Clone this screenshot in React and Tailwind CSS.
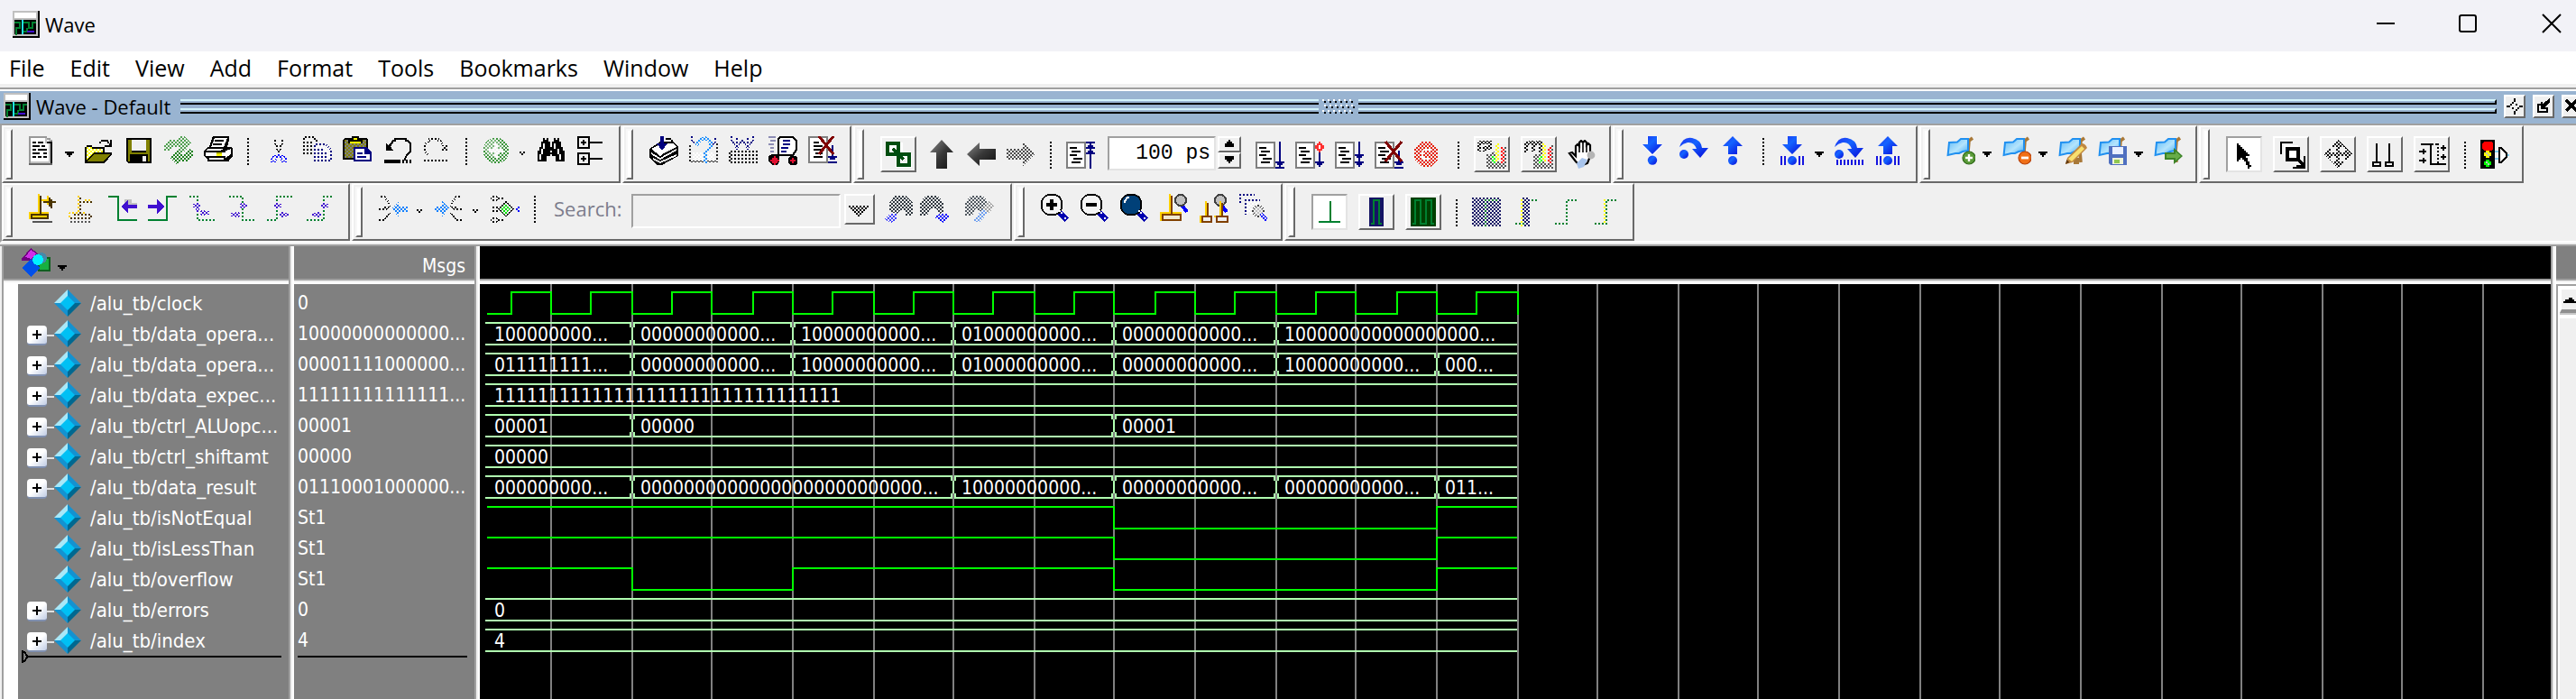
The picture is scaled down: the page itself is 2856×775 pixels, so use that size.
import React from "react";

/* ---------- drawing helpers ---------- */

const PAL = {
  k: "#000000", w: "#ffffff", g: "#808080", s: "#999999", d: "#666666", l: "#c0c0c0",
};

const Art = ({ dim, odd, smooth, children }) => (
  <svg
    viewBox="0 0 16 16"
    className="block size-8 shrink-0"
    shapeRendering={smooth ? "auto" : "crispEdges"}
    fill="none"
    aria-hidden="true"
  >
    {children}
    {dim && <rect width="16" height="16" fill={odd ? "url(#ditherB)" : "url(#ditherA)"} />}
  </svg>
);

const pixelPath = (rows, ch) => {
  let d = "";
  rows.forEach((row, y) => {
    for (let x = 0; x < row.length; x++) {
      if (row[x] !== ch) continue;
      let end = x;
      while (row[end + 1] === ch) end++;
      d += `M${x} ${y}h${end - x + 1}v1h-${end - x + 1}z`;
      x = end;
    }
  });
  return d;
};

const Pixels = ({ rows }) => {
  const chars = [...new Set(rows.join("").replaceAll(".", ""))];
  return chars.map((c) => <path key={c} d={pixelPath(rows, c)} fill={PAL[c]} />);
};

const S = ({ d, c = "#000", w = 1, f = "none" }) => <path d={d} stroke={c} strokeWidth={w} fill={f} />;
const F = ({ d, c = "#000" }) => <path d={d} fill={c} />;

const Defs = () => (
  <svg className="absolute size-0" aria-hidden="true">
    <defs>
      <pattern id="ditherA" width="2" height="2" patternUnits="userSpaceOnUse">
        <path d="M0 0h1v1h-1zM1 1h1v1h-1z" fill="#f0f0f0" />
      </pattern>
      <pattern id="ditherB" width="2" height="2" patternUnits="userSpaceOnUse">
        <path d="M1 0h1v1h-1zM0 1h1v1h-1z" fill="#f0f0f0" />
      </pattern>
      <pattern id="paperYellow" width="2" height="2" patternUnits="userSpaceOnUse">
        <rect width="2" height="2" fill="#ff0" />
        <path d="M0 0h1v1h-1zM1 1h1v1h-1z" fill="#fff" />
      </pattern>
      <pattern id="boardTan" width="2" height="2" patternUnits="userSpaceOnUse">
        <rect width="2" height="2" fill="#808000" />
        <path d="M0 0h1v1h-1zM1 1h1v1h-1z" fill="#808080" />
      </pattern>
      <linearGradient id="stepBlue" x1="0" y1="0" x2="1" y2="1">
        <stop offset="0" stopColor="#2030f0" />
        <stop offset="0.4" stopColor="#1464ff" />
        <stop offset="1" stopColor="#0808d8" />
      </linearGradient>
      <linearGradient id="darkSteel" x1="0" y1="0" x2="1" y2="1">
        <stop offset="0" stopColor="#8c8c8c" />
        <stop offset="0.5" stopColor="#383838" />
        <stop offset="1" stopColor="#101010" />
      </linearGradient>
      <linearGradient id="flagBlue" x1="0" y1="0" x2="1" y2="1">
        <stop offset="0" stopColor="#5cb8f8" />
        <stop offset="0.55" stopColor="#b4e4fc" />
        <stop offset="1" stopColor="#38a8f8" />
      </linearGradient>
    </defs>
  </svg>
);

/* ---------- standard toolbar ---------- */

const NewDoc = () => (
  <Art>
    <Pixels
      rows={[
        "ssssssssss......",
        "swwwwwwwwlss....",
        "swwwwwwwwlwls...",
        "swkkwkkkwlkkk...",
        "swwwwwwwwwwlk...",
        "swkkkkwkkwwlk...",
        "swwwwwwwwwwlk...",
        "swkkwkkkkkwlk...",
        "swwwwwwwwwwlk...",
        "swkkkkwwkkwlk...",
        "swwwwwwwwwwlk...",
        "swkkwkkwkkwlk...",
        "swwwwwwwwwwlk...",
        "swwwwwwwwwwlk...",
        "slllllllllllk...",
        "ddddddddddddd...",
      ]}
    />
  </Art>
);
const OpenDoc = () => (
  <Art>
    <F d="M0 6h1v-1h3v1h7v3h4v1l-4 5H0z" />
    <F d="M1 6h3v1h6v2H5L1 13z" c="url(#paperYellow)" />
    <F d="M5 10h9l-4 4H1z" c="#808000" />
    <S d="M8 3.5h1M9 2.5h4M12.5 3.5h1M13.5 4.5h1" />
    <F d="M15 2v4h-4v-1h3v-3z" />
  </Art>
);
const Save = () => (
  <Art>
    <F d="M1 1h14v14h-13l-1-1z" />
    <F d="M2 2h2v7h8v-7h2v12h-1v-4h-10v4h-1z" c="#808000" />
    <F d="M4 2h8v6H4z" c="#f0f0f0" />
    <F d="M10 11h2v3h-2z" c="#f0f0f0" />
  </Art>
);
const Refresh = () => (
  <Art dim>
    <F d="M0 8V5l3-3h5V0h3l4 4-4 5H8V6H5L3 8z" c="#4fa04f" />
    <F d="M16 8v3l-3 3H8v2H7l-4-4 4-4h2v2h2l3-3z" c="#1c801c" />
  </Art>
);
const Print = () => (
  <Art>
    <F d="M5 0h9v2l-1 4h2l1 1v4l-2 2v1H2v-1L0 11V8l2-2h1z" />
    <F d="M6 1h7l-2 5H4z" c="#fff" />
    <F d="M2 7h9l-2 1H1zM1 9h11v2H1zM3 12h8v1H3zM12 8l3-1v3l-3 2z" c="#fff" />
    <S d="M6 2.5h5M5 4.5h5" />
    <F d="M7 9h3v1H7z" c="#c0c000" />
    <F d="M7 10h3v1H7z" c="#ff0" />
  </Art>
);
const Cut = () => (
  <Art dim odd>
    <S d="M6.5 1v3l1 1v2l1 1v2M10.5 1v3l-1 1v2l-1 1v2" />
    <S d="M8.5 9v2M7.5 11h-2l-1 2v1h2l1-2zM9.5 11h2l1 1v2h-2z" c="#00f" />
  </Art>
);
const Copy = () => (
  <Art dim>
    <S d="M.5 .5h5l2 2v7h-7zM2 3.5h3M2 5.5h4M2 7.5h4" />
    <S d="M6.5 4.5h6l3 3v6h-9zM8 7.5h4M8 9.5h6M8 11.5h6" c="#000080" f="#fff" />
  </Art>
);
const Paste = () => (
  <Art>
    <F d="M1 1h12l1 1v11H0V2z" />
    <F d="M1 2h12v10H1z" c="url(#boardTan)" />
    <F d="M3 4V2h2V0h4v2h2v2z" />
    <F d="M6 1h2v1H6zM4 3h6v1H4z" c="#ff0" />
    <F d="M6 6h7l3 3v5H6z" c="#000080" />
    <F d="M7 7h5v3h3v3H7z" c="#fff" />
    <S d="M8 9.5h3M8 11.5h5" c="#000080" />
  </Art>
);
const Undo = () => (
  <Art>
    <F d="M2 4l1 1 1-1v1l2 3H2z" />
    <S d="M4 5.5l2-3h1v-1h6v1h1l1.5 1.5v4.5l-2 2-1 2v1" />
    <F d="M1 13h9v2H1zM11 13h1v2h-1zM13 13h1v2h-1zM15 13h1v2h-1z" />
  </Art>
);
const Redo = () => (
  <Art dim odd>
    <F d="M14 4v4h-4z" />
    <S d="M12 5.5l-2-3h-1v-1h-5v1l-2.5 2v4l2 2M1 13.5h14" />
  </Art>
);
const GoDisabled = () => (
  <Art dim>
    <circle cx="8" cy="8" r="7.2" fill="#3c963c" />
    <circle cx="6.5" cy="6.5" r="5" fill="#7ab87a" />
    <F d="M7 4h2v3h3v2H9v3H7V9H4V7h3z" c="#fff" />
  </Art>
);
const Find = () => (
  <Art>
    <Pixels
      rows={[
        "................",
        "...kwk...kwk....",
        "...kkk...kkk....",
        "..kkkkk.kkkkk...",
        "..kwkkk.kwkkk...",
        "..kwkkk.kwkkk...",
        ".kkwkkkkkwkkkk..",
        ".kwkkkkkkkkwkk..",
        "kkwkkkkwkkkwkkk.",
        "kkwkkkkkkkkwkkk.",
        "kwkkkkk.kkkkwkk.",
        "kwkkk.....kkwkk.",
        "kwkkk.....kkwkk.",
        "kkkkk.....kkkkk.",
      ]}
    />
  </Art>
);
const Tree = () => (
  <Art>
    <S d="M.5 .5h6v6h-6zM.5 9.5h6v6h-6zM7 3.5h7M7 12.5h7M2 3.5h3M3.5 2v3M2 12.5h3M3.5 11v3" />
  </Art>
);

/* ---------- compile toolbar ---------- */

const Compile = () => (
  <Art>
    <F d="M0 7l6-4h7l3 3v5l-9 5H4l-4-4z" />
    <F d="M1 7l6-3h6l2 2-8 4-1 1zM1 9l5 3 9-5v1l-9 5-5-3zM2 12l4 2 9-4v1l-9 4-4-2z" c="#fff" />
    <S d="M9 1.5h3M12.5 2v2" />
    <F d="M6 0h2v4h2L7 8 4 4h2z" c="#000080" />
  </Art>
);
const CompileOld = () => (
  <Art>
    <S d="M.5 4v10h15V4" c="#222" />
    <F d="M2 9h12v4H2z" c="#fff" />
    <S d="M4 5l2-3 3-1 3 2v3l-3 3v6" c="#1e90ff" w={2} />
    <S d="M1.5 0v2l2 2M14.5 0v3l-2 2" c="#000080" />
    <rect width="16" height="16" fill="url(#ditherA)" />
  </Art>
);
const CompileAll = () => (
  <Art dim>
    <S d="M0 8.5h16M0 10.5h16M0 12.5h16M0 14.5h16M.5 8v7M15.5 8v7" />
    <S d="M1.5 0v2l3 5 3-5M7.5 2l3 5 3-5V0" c="#000080" />
    <S d="M4.5 0v6M10.5 0v6" c="#000080" />
  </Art>
);
const Simulate = () => (
  <Art>
    <S d="M0 .5h4M1 2.5h3M0 4.5h3M1 6.5h2M1 8.5h2" c="#8c8cb4" />
    <S d="M5.5 1.5l1-1h7l2 2v5l-2 3h-8v-4z" f="#fff" />
    <S d="M8 2.5h4M8 4.5h4M7 6.5h4M7 8.5h3" c="#000080" />
    <F d="M2 10h3l1 1v3l-1 2H2l-2-2v-3zM12 11h3l1 1v3l-1 1h-3l-1-1v-3z" />
    <F d="M3 11h1v1h1v1h1v1H5v1H4v1H3v-1H2v-1H1v-1h1v-1h1zM13 12h1v1h1v1h-1v1h-1v-1h-1v-1h1z" c="#e01030" />
  </Art>
);
const BreakSim = () => (
  <Art>
    <F d="M0 0h11v15H0z" c="#808080" />
    <F d="M1 1h9v13H1z" c="#fff" />
    <S d="M3 3.5h3M3 5.5h5M3 7.5h4M4 9.5h4M3 11.5h5" />
    <S d="M13.5 5v6M11 11.5h5M12 12.5h3M11 14.5h5" c="#000080" />
    <S d="M6 0l8 10M14 0l-8 10" c="#800000" w={1.6} />
  </Art>
);

/* ---------- simulate toolbar ---------- */

const Chain = () => (
  <Art>
    <S d="M3 3h6v5h-6zM8 9h6v5h-6zM5 6l5 5M7 5l5 5" c="#fff" w={3} />
    <S d="M2 2h6v6h-6zM8 8h6v6h-6z" c="#004d10" w={2} />
    <S d="M5 5l6 6" c="#004d10" w={1.5} />
  </Art>
);
const ArrowUp = () => (
  <Art smooth>
    <F d="M8 0l6.5 7H11v9H5V7H1.5z" c="url(#darkSteel)" />
  </Art>
);
const ArrowLeft = () => (
  <Art smooth>
    <F d="M0 8l7-6.5V5h9v6H7v3.5z" c="url(#darkSteel)" />
  </Art>
);
const ArrowRightDim = () => (
  <Art dim>
    <F d="M16 8L9 1.5V5H0v6h9v3.5z" c="#4c4c4c" />
  </Art>
);

const Sheet = () => (
  <>
    <F d="M0 1h11v15H0z" c="#808080" />
    <F d="M1 2h9v13H1z" c="#fff" />
    <S d="M2 4.5h4M3 6.5h5M2 8.5h4M4 10.5h5M3 12.5h5" />
  </>
);
const Restart = () => (
  <Art>
    <Sheet />
    <S d="M13.5 1v15M11 1.5h5M11 4.5h5M12 3.5h3M11 7.5h5M12 6.5h3" c="#000080" />
  </Art>
);
const Run = () => (
  <Art>
    <Sheet />
    <S d="M13.5 1v14M11 12.5h5M12 13.5h3M11 15.5h5" c="#000080" />
  </Art>
);
const RunContinue = () => (
  <Art>
    <Sheet />
    <S d="M13.5 6v9M11 12.5h5M12 13.5h3" c="#000080" />
    <F d="M13 1h1v1h1v1h1v2h-1v1h-1v1h-1V6h-1V5h-1V3h1V2h1z" c="#ff3030" />
    <F d="M13 3h1v2h-1z" c="#fff" />
  </Art>
);
const RunAll = () => (
  <Art>
    <Sheet />
    <S d="M13.5 1v14M11 8.5h5M12 9.5h3M11 12.5h5M12 13.5h3" c="#000080" />
  </Art>
);
const BreakRun = () => (
  <Art>
    <Sheet />
    <S d="M13.5 6v6M11 12.5h5M12 13.5h3M11 15.5h5" c="#000080" />
    <S d="M6 1l9 11M15 1L6 12" c="#800000" w={1.6} />
  </Art>
);
const Stop = () => (
  <Art dim>
    <F d="M4 1h5l4 4v6l-4 4H4l-4-4V5z" c="#e62008" />
    <S d="M9 5.5H5.5l-1 1v3l1 1H9" c="#fff" />
  </Art>
);
const Bars = () => (
  <>
    <F d="M5 8h3V6l4 2v8H5z" c="#555" />
    <F d="M8 9h2v4H8z" c="#0f0" />
    <F d="M10 2h2v10h-2z" c="#ff0" />
    <F d="M13 4h2v9h-2z" c="#f00" />
    <F d="M5 13h11v3H5zM15 3h1v10h-1z" c="#555" />
  </>
);
const ProfileA = () => (
  <Art dim>
    <Bars />
    <S d="M1 1.5h6v3H4v2M1 1.5v5" w={2} />
  </Art>
);
const ProfileB = () => (
  <Art dim odd>
    <Bars />
    <S d="M1 7V2.5l2-1h2v5M6 3l1-1.5h2v5" w={2} />
  </Art>
);
const Hand = () => (
  <Art smooth>
    <S
      d="M1 7.5l1.5-.5 2 2V3.5l1-1 1 1V1.5l1-1 1 1 1-1 1 1V3l1-1 1 1v6l-1.5 4-4 1.5L4.5 12z"
      f="#fff"
      w={1.1}
    />
    <S d="M6.5 3v4M8.5 2v5M10.5 3v4" w={0.8} />
    <F d="M5 13l3-3 3 1-2 4-3 1z" c="#a8c4ec" />
    <circle cx="13" cy="8.5" r="2.2" fill="#b4b4b4" />
  </Art>
);

/* ---------- step toolbar ---------- */

const SB = "url(#stepBlue)";
const StepInto = () => (
  <Art smooth>
    <F d="M4 0h6v4.5h3L7 11 1 4.5h3z" c="#fff" />
    <F d="M4.5 0h5v4.5h3L7 10 1.5 4.5h3z" c={SB} />
    <circle cx="7" cy="13.3" r="2.6" fill={SB} />
  </Art>
);
const StepOver = () => (
  <Art smooth>
    <F d="M0 6Q2 0 7 1q5 1 5.5 5.5H16L11.500 12 7 7h2.500Q8 3 4.500 3.500 2 4 0 6z" c={SB} />
    <circle cx="2.5" cy="10" r="2.5" fill={SB} />
  </Art>
);
const StepOut = () => (
  <Art smooth>
    <F d="M5 10h5V5.5h3L7.5 0 2 5.5h3z" c={SB} />
    <circle cx="7.5" cy="13.5" r="2.5" fill={SB} />
  </Art>
);
const StepIntoCur = () => (
  <Art smooth>
    <F d="M5 0h5v4.5h3L7.5 10 2 4.5h3z" c={SB} />
    <circle cx="7.5" cy="13.5" r="2.5" fill={SB} />
    <S d="M1.5 11v5M3.5 11v5M11.5 11v5M13.5 11v5" c="#1414e0" />
  </Art>
);
const StepOverCur = () => (
  <Art smooth>
    <F d="M0 6Q2 0 7 1q5 1 5.5 5.5H16L11.500 12 7 7h2.500Q8 3 4.500 3.500 2 4 0 6z" c={SB} />
    <circle cx="2.5" cy="10" r="2.5" fill={SB} />
    <path d="M1 14.5h15" stroke="#1414e0" strokeWidth="3" strokeDasharray="1 1" />
  </Art>
);
const StepOutCur = () => (
  <Art smooth>
    <F d="M5 10h5V5.5h3L7.5 0 2 5.5h3z" c={SB} />
    <circle cx="7.5" cy="13.5" r="2.5" fill={SB} />
    <S d="M1.5 11v5M3.5 11v5M11.5 11v5M13.5 11v5" c="#1414e0" />
  </Art>
);

/* ---------- bookmark toolbar ---------- */

const Flag = ({ children }) => (
  <Art smooth>
    <S d="M14.5 1l-2 1.5-.5 6 .5 6" c="#a87838" w={1.8} />
    <path
      d="M1.5 3.5L6 3.2 8 1.5 12 1.5V8L9 8.5 7 9.5 5 9.5 .8 10.5z"
      fill="url(#flagBlue)"
      stroke="#2090f0"
    />
    {children}
  </Art>
);
const FlagAdd = () => (
  <Flag>
    <circle cx="12.5" cy="12" r="3.5" fill="#5a9a38" stroke="#2e6a18" strokeWidth=".6" />
    <S d="M12.5 10v4M10.5 12h4" c="#fff" w={1.2} />
  </Flag>
);
const FlagRemove = () => (
  <Flag>
    <circle cx="12.5" cy="12" r="3.5" fill="#f07018" stroke="#b84008" strokeWidth=".6" />
    <S d="M10.5 12h4" c="#fff" w={1.4} />
  </Flag>
);
const FlagEdit = () => (
  <Flag>
    <S d="M10 12v3.5" c="#a87838" w={3} />
    <F d="M4 15.5l1-3.5 8-8q2 0 3 2.5L8 14.5z" c="#c08840" />
    <F d="M5.5 12.5l7.5-7 1.5 1.5-7 7z" c="#f8e070" />
    <F d="M4 15.5l.7-2.5 1.5 1.5z" c="#603810" />
  </Flag>
);
const FlagSave = () => (
  <Flag>
    <F d="M6 5.5h10V16H7l-1-1z" c="#5070c0" />
    <F d="M8 6h6v4H8z" c="#eaf0ff" />
    <F d="M8 12h6v3.5H8z" c="#f0f4d8" />
    <F d="M9 13h3v2H9z" c="#90c850" />
  </Flag>
);
const FlagGo = () => (
  <Flag>
    <F d="M6 9h5V6.5l5 4.5-5 4.5V13H6z" c="#3c8428" />
    <F d="M7 10h5V8.5l3 2.5-3 2.5V12H7z" c="#68ac48" />
  </Flag>
);

/* ---------- wave mouse-mode toolbar ---------- */

const Pointer = () => (
  <Art>
    <Pixels
      rows={[
        "................",
        "................",
        "....k...........",
        "....kk..........",
        "....kkk.........",
        "....kkkk........",
        "....kkkkk.......",
        "....kkkkkk......",
        "....kkkkkkk.....",
        "....kkkkk.......",
        "....kk.kkk......",
        "....k...kk......",
        ".........kk.....",
        ".........kk.....",
        "..........kk....",
        "..........k.....",
      ]}
    />
  </Art>
);
const ZoomMode = () => (
  <Art>
    <S d="M2.5 8V1.5H9" />
    <F d="M4 3h8v8H4z" c="#fff" />
    <S d="M6 5h6v6H6z" w={2} f="#fff" />
    <S d="M11 10l4 4" w={1.5} />
    <S d="M15.5 9v6.5H9M11 14.5h4" />
  </Art>
);
const PanMode = () => (
  <Art>
    <F d="M8 0l4 4H9v3h3V4l4 4-4 4V9H9v3h3l-4 4-4-4h3V9H4v3L0 8l4-4v3h3V4H4z" />
    <rect width="16" height="16" fill="url(#ditherB)" />
  </Art>
);
const TwoCursor = () => (
  <Art>
    <S d="M3.5 2v11M10.5 2v11M1.5 12.5h4v2h-4zM8.5 12.5h4v2h-4z" />
  </Art>
);
const EditMode = () => (
  <Art>
    <S d="M2 2.5h5.5v11H16" />
    <path d="M8 2.5h4M11.5 2v11" stroke="#000" strokeDasharray="1 1" />
    <S d="M1 6.5h4M3.5 5v3M1 11.5h4M3.5 10v3M13 4.5h3M14.5 3v3M13 9.5h3M14.5 8v3" />
  </Art>
);
const StopLight = () => (
  <Art>
    <F d="M0 0h8v16H0z" />
    <F d="M2 1h4l1 1v3l-1 1H2L1 5V2z" c="#f00" />
    <F d="M3 6h2v1h1v2H5v1H3V9H2V7h1z" c="#ff0" />
    <F d="M3 11h2v1h1v2H5v1H3v-1H2v-2h1z" c="#0f0" />
    <F d="M3 7h1v1H3zM4 8h1v1H4zM3 12h1v1H3zM4 13h1v1H4z" c="#c0c0c0" />
    <S d="M8 6.5h2M8 10.5h2M15 8.5h1" c="#80d0f0" />
    <S d="M10.5 4.5h1l3 3v2l-3 3h-1z" f="#fff" />
  </Art>
);

/* ---------- cursor toolbar ---------- */

const CursorAdd = () => (
  <Art>
    <S d="M2 15.5h11" c="#555" />
    <S d="M5.5 0v10M0 10.5h11M.5 11v3M10.5 1v5M7 3.5h4" c="#ffd000" />
    <S d="M1.5 11.5h9v2h-9zM6.5 1v10M8 4.5h7M11.5 2v5M12.5 3v5" c="#4a3400" />
    <S d="M2 12.5h8" c="#ffd000" />
  </Art>
);
const CursorDel = () => (
  <Art dim odd>
    <S d="M5.5 0v10M0 11.5l1-1h9M.5 11v3M8 3.5h5" c="#ffd000" />
    <S d="M6.5 1v10M8 4.5h6M2 11.5h10l1 1-1 1H1" c="#4a3400" />
    <S d="M1 15.5h12" c="#555" />
  </Art>
);
const G = "#008030";
const V = "#4010d0";
const PrevTrans = () => (
  <Art>
    <S d="M0 1.5h5.5v13H16" c={G} />
    <F d="M9 3h4v2h3v2H9z" c="#c0c0c0" />
    <F d="M7 7l4-4v3h5v2h-5v3z" c={V} />
  </Art>
);
const NextTrans = () => (
  <Art>
    <S d="M0 14.5h10.5V1.5H16" c={G} />
    <F d="M9 7L5 3v3H0v2h5v3z" c={V} />
  </Art>
);
const EdgeFallPrev = () => (
  <Art dim odd>
    <S d="M0 1.5h5.5v13H16" c={G} />
    <S d="M3 6.5h4M5.5 5v5M7 10.5h5M8.5 9v3" c={V} w={2} />
  </Art>
);
const EdgeFallNext = () => (
  <Art dim odd>
    <S d="M0 1.5h8.5v13H16" c={G} />
    <S d="M7 6.5h4M8.5 5v3M2 11.5h5M5.5 10v3" c={V} w={2} />
  </Art>
);
const EdgeRisePrev = () => (
  <Art dim odd>
    <S d="M0 14.5h5.5V1.5H15" c={G} />
    <S d="M4 6.5h4M5.5 5v3M7 11.5h5M8.5 10v3" c={V} w={2} />
  </Art>
);
const EdgeRiseNext = () => (
  <Art dim odd>
    <S d="M0 14.5h9.5V1.5H15" c={G} />
    <S d="M8 6.5h4M9.5 5v3M3 11.5h5M6.5 10v3" c={V} w={2} />
  </Art>
);

/* ---------- find / expand toolbar ---------- */

const Gather = () => (
  <Art>
    <S d="M0 1.5h3l3 4M0 8.5h4l2-2M0 14.5h3l3-4M3 7.5h2" />
    <F d="M7 8l4-4v3h5v3h-5v3z" c="#1080ff" />
    <rect width="16" height="16" fill="url(#ditherB)" />
  </Art>
);
const Spread = () => (
  <Art>
    <S d="M15 1.5h-3l-3 4M15 8.5h-4l-2-2M15 14.5h-3l-3-4M10 7.5h2" />
    <F d="M8 8L4 4v3H0v3h4v3z" c="#1080ff" />
    <rect width="16" height="16" fill="url(#ditherB)" />
  </Art>
);
const Expand = () => (
  <Art dim odd>
    <S d="M0 1.5h3l1 1-1 1H0zM4 2.5h4M0 7.5h4M0 9.5h4M0 13.5h3l1 1-1 1H0zM4 14.5h4M8.5 4l4 4-4 4-4-4z" />
    <F d="M8 5l3 3-3 4-3-4z" c="#00e000" />
    <F d="M14 7h2v3h-2z" c="#00f" />
  </Art>
);
const FindPrev = () => (
  <Art dim>
    <F d="M3 10V5l3-4h6l4 4v7h-4V9H9L7 11z" c="#303840" />
    <F d="M0 14l3-3h4v3l-3 2z" c="#4040ff" />
  </Art>
);
const FindNext = () => (
  <Art dim>
    <F d="M0 12V5l3-4h7l3 4v5l-2 1-2-3H6l-2 4z" c="#303840" />
    <F d="M8 13l3-2h5v2l-3 3z" c="#0000ff" />
  </Art>
);
const FindOpts = () => (
  <Art dim>
    <F d="M0 12V5l3-4h7l3 4-4 5-3-2-2 4z" c="#505860" />
    <F d="M10 8l3 2-5 6-4-1z" c="#70a0f0" />
    <F d="M13 4l3 3-3 4-3-3z" c="#a0a0a0" />
  </Art>
);

/* ---------- zoom toolbar ---------- */

const Lens = ({ fill, children }) => (
  <Art>
    <S d="M9.5 9.5l5 5" c="#0000b0" w={3} />
    <F d="M4 0h4l2 1 1 1 1 2v4l-1 2-1 1-2 1H4l-2-1-1-1-1-2V4l1-2 1-1z" />
    <F d="M4 1h4l2 1 1 2v4l-1 2-2 1H4l-2-1-1-2V4l1-2z" c={fill} />
    {children}
    <F d="M10 10h1v1h1v-1h-1V9h-1zM13 13h1v1h-1z" c="#fff" />
  </Art>
);
const ZoomIn = () => (
  <Lens fill="#f4f4f4">
    <F d="M5 3h2v2h2v2H7v2H5V7H3V5h2z" />
  </Lens>
);
const ZoomOut = () => (
  <Lens fill="#f4f4f4">
    <F d="M3 5h6v2H3z" />
  </Lens>
);
const ZoomFull = () => (
  <Lens fill="#004078">
    <S d="M2.5 5v-1l1.5-2h1" c="#fff" />
  </Lens>
);
const SmallLens = () => (
  <>
    <S d="M12 6l3 4" c="#00f" w={2} />
    <circle cx="11.5" cy="3.5" r="3" fill="#c0c0c0" stroke="#404040" />
  </>
);
const ZoomCursor = () => (
  <Art>
    <SmallLens />
    <S d="M0 10.5h12M.5 11v4M5.5 0v11" c="#ffd000" />
    <S d="M1.5 11.5h10v3h-10zM6.5 1v10" c="#804000" />
    <F d="M2 12h9v2H2z" c="#f0e8d0" />
  </Art>
);
const ZoomBetween = () => (
  <Art>
    <SmallLens />
    <S d="M0 12.5h7M8 12.5h7M3.5 4v8M11.5 4v8M.5 12v4" c="#ffd000" />
    <S d="M1.5 12.5h5v3h-5zM9.5 12.5h6v3h-6zM4.5 5v7M12.5 5v7" c="#804000" />
  </Art>
);
const ZoomOthers = () => (
  <Art dim odd>
    <S d="M.5 6V.5h8M3.5 11.5V3.5h8" c="#000080" />
    <F d="M4 4h7v7H4z" c="#fff" />
    <circle cx="10.5" cy="9.5" r="3" fill="#c0c0c0" stroke="#404040" />
    <S d="M12 11l3.5 4" c="#00f" w={2} />
  </Art>
);

/* ---------- format toolbar ---------- */

const WaveCursor = () => (
  <Art>
    <S d="M8.5 2v11.5M2 13.5h12" c={G} />
  </Art>
);
const WaveNavy = () => (
  <Art>
    <F d="M4 0h8v16H4z" c="#141464" />
    <S d="M5 14.5h1.5V1.5h3v13H11" c={G} />
  </Art>
);
const WaveGreen = () => (
  <Art>
    <F d="M1 0h14v16H1z" c="#004000" />
    <S d="M2 14.5h1.5V1.5h3v13h3V1.5h3v13H14" c={G} />
  </Art>
);
const WaveDim = () => (
  <Art dim odd>
    <F d="M0 0h16v16H0z" c="#141464" />
    <S d="M7.5 16V1.5H15" c={G} />
  </Art>
);
const WaveHalf = () => (
  <Art dim odd>
    <F d="M5 0h5v16H5z" c="#141464" />
    <S d="M5.5 0v16" c="#ff0" />
    <S d="M10 1.5h5M2 14.5h5" c={G} />
  </Art>
);
const WaveLine = () => (
  <Art dim odd>
    <S d="M2 14.5h6.5V1.5H15" c={G} />
  </Art>
);
const WaveMark = () => (
  <Art dim odd>
    <S d="M2 14.5h6.5V1.5H15" c={G} />
    <S d="M7.5 0v14" c="#ff0" />
  </Art>
);

/* ---------- toolbar parts ---------- */

const Tool = ({ label, icon: Icon }) => (
  <button type="button" aria-label={label} className="mx-1.5 size-8 shrink-0">
    <Icon />
  </button>
);
const BoxTool = ({ label, icon: Icon, pressed }) => (
  <button
    type="button"
    aria-label={label}
    className={
      "mx-1.5 flex size-10 shrink-0 items-center justify-center border-2 " +
      (pressed
        ? "border-t-[#a0a0a0] border-l-[#a0a0a0] border-r-[#e3e3e3] border-b-[#e3e3e3] bg-white"
        : "border-t-white border-l-white border-r-[#696969] border-b-[#696969]")
    }
  >
    <Icon />
  </button>
);
const Caret = ({ label, off }) => (
  <button type="button" aria-label={label} className="flex h-10 w-[18px] shrink-0 items-center pl-0.5">
    <svg viewBox="0 0 5 3" className="h-1.5 w-2.5" shapeRendering="crispEdges" aria-hidden="true">
      {off ? <path d="M1 0h1v1h1v-1h1v1h-1v1h-1v-1h-1z" /> : <path d="M0 0h5v1h-1v1h-1v1h-1v-1h-1v-1h-1z" />}
    </svg>
  </button>
);
const Sep = () => (
  <svg viewBox="0 0 1 15" className="mx-2.5 mt-0.5 h-[30px] w-0.5 shrink-0" shapeRendering="crispEdges" aria-hidden="true">
    <path d="M.5 0v15" stroke="#000" strokeDasharray="1 1" />
  </svg>
);
const Group = ({ label, center, children }) => (
  <div
    role="toolbar"
    aria-label={label}
    className="flex h-16 shrink-0 border-2 border-t-white border-l-white border-r-[#696969] border-b-[#696969]"
  >
    <div className="mt-0.5 mr-3 ml-0.5 h-14 w-2 border-2 border-t-[#f8f8f8] border-l-[#f8f8f8] border-r-[#696969] border-b-[#696969] bg-white" />
    <div className={"mt-2.5 flex h-10 pr-2 " + (center ? "items-center" : "items-start")}>{children}</div>
  </div>
);

const WaveLogo = () => (
  <svg viewBox="0 0 15 15" className="size-[30px] shrink-0" shapeRendering="crispEdges" aria-hidden="true">
    <path d="M0 0h15v15H0z" fill="#000" />
    <path d="M0 0h14v14H0z" fill="#c0c0c0" />
    <path d="M1 1h12v3H1z" fill="#fff" />
    <path d="M1 5h12v8H1z" fill="#000" />
    <path d="M1 6.5h3v3h-2v4M6 6.5h3v3h2v-3h2M6 11.5h2v-2" stroke="#008030" fill="none" />
    <path d="M8 11h4v1H8z" fill="#4010d0" />
    <path d="M5 5h1v8H5z" fill="#20e0e0" />
  </svg>
);

const HeaderLines = ({ capped }) => (
  <div className="flex flex-1 flex-col gap-1">
    {[0, 1].map((n) => (
      <div
        key={n}
        className={
          "h-1.5 border-t-2 border-b-2 border-t-[#d4f5fc] border-b-black " +
          (capped ? "border-r-2 border-r-black" : "")
        }
      />
    ))}
  </div>
);

const PaneButton = ({ label, children }) => (
  <button
    type="button"
    aria-label={label}
    className="flex h-[26px] w-6 shrink-0 items-center justify-center border-2 border-t-white border-l-white border-r-[#696969] border-b-[#696969] bg-[#f0f0f0]"
  >
    <svg viewBox="0 0 9 9" className="size-[18px]" shapeRendering="crispEdges" fill="none" aria-hidden="true">
      {children}
    </svg>
  </button>
);

/* ---------- signals ---------- */

const Z = (n) => "0".repeat(n);
const STEP = 44.625;
const tick = (i) => 78 + 2 * Math.round(STEP * i);
const END = 12;

const SIGNALS = [
  { name: "/alu_tb/clock", value: "0", clock: true },
  {
    name: "/alu_tb/data_opera...", value: "1" + Z(13) + "...",
    bus: [[null, "1" + Z(8) + "..."], [1, Z(11) + "..."], [3, "1" + Z(10) + "..."], [5, "01" + Z(9) + "..."], [7, Z(11) + "..."], [9, "1" + Z(17) + "..."]],
  },
  {
    name: "/alu_tb/data_opera...", value: "00001111000000...",
    bus: [[null, "011111111..."], [1, Z(11) + "..."], [3, "1" + Z(10) + "..."], [5, "01" + Z(9) + "..."], [7, Z(11) + "..."], [9, "1" + Z(10) + "..."], [11, "000..."]],
  },
  { name: "/alu_tb/data_expec...", value: "1".repeat(14) + "...", bus: [[null, "1".repeat(32)]] },
  { name: "/alu_tb/ctrl_ALUopc...", value: "00001", bus: [[null, "00001"], [1, "00000"], [7, "00001"]] },
  { name: "/alu_tb/ctrl_shiftamt", value: "00000", bus: [[null, "00000"]] },
  {
    name: "/alu_tb/data_result", value: "01110001000000...",
    bus: [[null, Z(9) + "..."], [1, Z(26) + "..."], [5, "1" + Z(10) + "..."], [7, Z(11) + "..."], [9, Z(11) + "..."], [11, "011..."]],
  },
  { name: "/alu_tb/isNotEqual", value: "St1", bit: [7, 11] },
  { name: "/alu_tb/isLessThan", value: "St1", bit: [7, 11] },
  { name: "/alu_tb/overflow", value: "St1", bit: [1, 3, 7, 11] },
  { name: "/alu_tb/errors", value: "0", bus: [[null, "0"]] },
  { name: "/alu_tb/index", value: "4", bus: [[null, "4"]] },
];

const clockPath = () => {
  let d = "M8 29";
  for (let i = 0; i <= END; i++) {
    const rise = 79 + 2 * Math.round(STEP * (i - 0.5));
    d += `H${rise}V5H${tick(i) + 1}V${i === END ? 30 : 29}`;
  }
  return d;
};
const bitPath = (flips) => {
  let d = "M8 5";
  flips.forEach((t, i) => {
    d += `H${tick(t) + 1}V${i % 2 ? 5 : 29}`;
  });
  return d + `H${tick(END)}`;
};
const Trace = ({ signal, y }) => (
  <g transform={`translate(0 ${y})`} fill="none" strokeWidth="2">
    {signal.clock && <path d={clockPath()} stroke="#00ff00" />}
    {signal.bit && <path d={bitPath(signal.bit)} stroke="#00ff00" />}
    {signal.bus && (
      <>
        <path d={`M6 5H${tick(END)}M6 29H${tick(END)}`} stroke="#b0ffb0" />
        {signal.bus.slice(1).map(([t]) => {
          const x = tick(t);
          return (
            <g key={t}>
              <path d={`M${x + 1} 4v6M${x + 1} 24v6`} stroke="#808080" />
              <path d={`M${x - 1} 4v6M${x + 3} 4v6M${x + 1} 10v14M${x - 1} 24v6M${x + 3} 24v6`} stroke="#b0ffb0" />
            </g>
          );
        })}
      </>
    )}
  </g>
);

const Waveform = () => (
  <div className="relative flex-1 overflow-hidden bg-black">
    <svg className="absolute inset-0 size-full" shapeRendering="crispEdges" role="img" aria-label="Signal traces">
      {Array.from({ length: 26 }, (_, i) => (
        <rect key={i} x={tick(i)} y="0" width="2" height="100%" fill="#808080" />
      ))}
      {SIGNALS.map((s, i) => (
        <Trace key={i} signal={s} y={4 + 34 * i} />
      ))}
    </svg>
    <div className="relative pt-1 pl-1.5 text-white">
      {SIGNALS.map((s, i) => (
        <div key={i} className="flex h-[34px] leading-9 whitespace-nowrap">
          {(s.bus || []).map(([t, text], k, all) => {
            const from = t === null ? 6 : tick(t);
            const to = all[k + 1] ? tick(all[k + 1][0]) : tick(END);
            return (
              <span key={k} className="shrink-0 pl-2.5" style={{ width: to - from }}>
                {text}
              </span>
            );
          })}
        </div>
      ))}
    </div>
  </div>
);

const Diamond = () => (
  <svg viewBox="0 0 30 30" className="size-[30px] shrink-0" aria-hidden="true">
    <path d="M15 0L0 15h15z" fill="#a8e8f8" />
    <path d="M15 0l15 15H15zM0 15l15 15V15z" fill="#1492d0" />
    <path d="M30 15L15 30V15z" fill="#006890" />
    <path d="M15 7l8 8-8 8-8-8z" fill="#00c0f4" />
  </svg>
);

const SignalName = ({ signal }) => (
  <li className="flex h-[34px] items-center pl-2.5">
    {signal.bus ? (
      <>
        <button
          type="button"
          aria-label={"Expand " + signal.name}
          className="mt-1 flex size-[22px] items-center justify-center rounded-sm border-b-2 border-[#8090b0] bg-linear-to-br from-white via-white to-[#c0cce4]"
        >
          <svg viewBox="0 0 5 5" className="size-2.5" shapeRendering="crispEdges" aria-hidden="true">
            <path d="M2 0h1v2h2v1h-2v2h-1v-2h-2v-1h2z" />
          </svg>
        </button>
        <span className="mt-1 h-0.5 w-2 bg-[#e0e0e0]" />
      </>
    ) : (
      <span className="w-[30px]" />
    )}
    <Diamond />
    <span className="pl-2.5 whitespace-nowrap">{signal.name}</span>
  </li>
);

const HSash = () => (
  <div className="h-1.5 shrink-0 border-t-2 border-b-2 border-t-[#a0a0a0] border-b-white bg-[#f0f0f0]" />
);
const VSash = () => (
  <div className="w-1.5 shrink-0 border-r-2 border-l-2 border-r-white border-l-[#a0a0a0] bg-[#f0f0f0]" />
);

const MENUS = ["File", "Edit", "View", "Add", "Format", "Tools", "Bookmarks", "Window", "Help"];

export default function App() {
  return (
    <div className="flex min-h-screen flex-col overflow-hidden bg-[#f0f0f0] font-['Open_Sans','Noto_Sans',sans-serif] text-black">
      <Defs />

      <header className="flex h-[57px] shrink-0 items-center bg-[#f2f2f7] pr-[11px] pb-1 pl-3.5">
        <WaveLogo />
        <h1 className="pl-1.5 text-[22px] leading-8">Wave</h1>
        <div className="ml-auto flex gap-[60px]">
          <button type="button" aria-label="Minimize" className="size-8">
            <svg viewBox="0 0 32 32" fill="none" stroke="#000" strokeWidth="2">
              <path d="M6 15h20" />
            </svg>
          </button>
          <button type="button" aria-label="Maximize" className="size-8">
            <svg viewBox="0 0 32 32" fill="none" stroke="#000" strokeWidth="2">
              <rect x="6" y="6" width="18" height="18" rx="2" />
            </svg>
          </button>
          <button type="button" aria-label="Close" className="size-8">
            <svg viewBox="0 0 32 32" fill="none" stroke="#000" strokeWidth="2">
              <path d="M6 5l20 20M26 5L6 25" />
            </svg>
          </button>
        </div>
      </header>

      <nav aria-label="Main menu" className="flex h-9 shrink-0 items-center gap-7 bg-white pl-2.5 text-[25px] leading-9">
        {MENUS.map((m) => (
          <button key={m} type="button">{m}</button>
        ))}
      </nav>

      <div className="mt-1 flex h-[42px] shrink-0 items-center border-t-2 border-b-2 border-[#a0a0a0] bg-[#99b4d1] pl-1 shadow-[inset_0_2px_0_#ffffff]">
        <WaveLogo />
        <h2 className="w-[166px] pl-1.5 text-[22px] leading-8 whitespace-nowrap">Wave - Default</h2>
        <HeaderLines />
        <svg viewBox="0 0 22 8" className="h-4 w-11 shrink-0" shapeRendering="crispEdges" aria-hidden="true">
          {[0, 1, 2].map((r) =>
            [0, 1, 2, 3, 4, 5].map((c) => (
              <g key={r + "-" + c}>
                <path d={`M${2 + 3 * c + (r % 2)} ${3 * r}h1v1h-1z`} fill="#fff" />
                <path d={`M${3 + 3 * c + (r % 2)} ${3 * r + 1}h1v1h-1z`} fill="#000" />
              </g>
            )),
          )}
        </svg>
        <HeaderLines capped />
        <div className="-mr-2 ml-2 flex gap-2">
          <PaneButton label="Zoom pane">
            <path d="M4 0h1v2h-1zM4 7h1v2h-1zM0 4h2v1h-2zM7 4h2v1h-2zM3 2h1v1h-1zM5 3h1v1h-1zM3 5h1v1h-1zM2 3h1v1h-1zM6 5h1v1h-1zM5 6h1v1h-1z" fill="#000" />
          </PaneButton>
          <PaneButton label="Dock pane">
            <path d="M1 3h2v1H2v3h4V6h1v2H1zM3 2h1v1l4-3v2l-3 3h2v1H3z" fill="#000" />
          </PaneButton>
          <PaneButton label="Close pane">
            <path d="M1 1l6 6M7 1L1 7" stroke="#000" strokeWidth="2" />
          </PaneButton>
        </div>
      </div>

      <div className="shrink-0 border-b-2 border-l-2 border-b-white border-l-[#a0a0a0]">
        <div className="flex gap-0.5">
          <Group label="Standard">
            <Tool label="New" icon={NewDoc} />
            <Caret label="New options" />
            <Tool label="Open" icon={OpenDoc} />
            <Tool label="Save" icon={Save} />
            <Tool label="Reload" icon={Refresh} />
            <Tool label="Print" icon={Print} />
            <Sep />
            <Tool label="Cut" icon={Cut} />
            <Tool label="Copy" icon={Copy} />
            <Tool label="Paste" icon={Paste} />
            <Tool label="Undo" icon={Undo} />
            <Tool label="Redo" icon={Redo} />
            <Sep />
            <Tool label="Add to wave" icon={GoDisabled} />
            <Caret label="Add options" off />
            <Tool label="Find" icon={Find} />
            <Tool label="Collapse all" icon={Tree} />
          </Group>
          <Group label="Compile">
            <Tool label="Compile" icon={Compile} />
            <Tool label="Compile out of date" icon={CompileOld} />
            <Tool label="Compile all" icon={CompileAll} />
            <Tool label="Simulate" icon={Simulate} />
            <Tool label="Break" icon={BreakSim} />
          </Group>
          <Group label="Simulation" center>
            <BoxTool label="Link" icon={Chain} />
            <Tool label="Environment up" icon={ArrowUp} />
            <Tool label="Environment back" icon={ArrowLeft} />
            <Tool label="Environment forward" icon={ArrowRightDim} />
            <Sep />
            <Tool label="Restart" icon={Restart} />
            <input
              type="text"
              aria-label="Run length"
              defaultValue="100 ps"
              className="ml-2 h-[38px] w-[120px] self-start border-2 border-t-[#a0a0a0] border-l-[#a0a0a0] border-r-[#e3e3e3] border-b-[#e3e3e3] bg-white pr-1 text-right font-['Liberation_Mono',monospace] text-[23px] leading-8"
            />
            <div className="mr-2.5 ml-0.5 flex w-[26px] flex-col self-start">
              {[
                ["Increase", "M3 0h1v1h1v1h1v2h-5v-2h1v-1h1z"],
                ["Decrease", "M1 0h5v2h-1v1h-1v1h-1v-1h-1v-1h-1z"],
              ].map(([n, d]) => (
                <button
                  key={n}
                  type="button"
                  aria-label={n + " run length"}
                  className="flex h-[18px] items-center justify-center border-2 border-t-white border-l-white border-r-[#696969] border-b-[#696969]"
                >
                  <svg viewBox="0 0 7 5" className="h-2.5 w-3.5" shapeRendering="crispEdges" aria-hidden="true">
                    <path d={d} />
                  </svg>
                </button>
              ))}
            </div>
            <Tool label="Run" icon={Run} />
            <Tool label="Continue run" icon={RunContinue} />
            <Tool label="Run all" icon={RunAll} />
            <Tool label="Break run" icon={BreakRun} />
            <Tool label="Stop" icon={Stop} />
            <Sep />
            <BoxTool label="Performance profiling" icon={ProfileA} />
            <BoxTool label="Memory profiling" icon={ProfileB} />
            <Tool label="Edit breakpoints" icon={Hand} />
          </Group>
          <Group label="Step">
            <Tool label="Step into" icon={StepInto} />
            <Tool label="Step over" icon={StepOver} />
            <Tool label="Step out" icon={StepOut} />
            <Sep />
            <Tool label="Step into current" icon={StepIntoCur} />
            <Caret label="Step options" />
            <Tool label="Step over current" icon={StepOverCur} />
            <Tool label="Step out current" icon={StepOutCur} />
          </Group>
          <Group label="Bookmarks">
            <Tool label="Add bookmark" icon={FlagAdd} />
            <Caret label="Add bookmark options" />
            <Tool label="Delete bookmark" icon={FlagRemove} />
            <Caret label="Delete bookmark options" />
            <Tool label="Manage bookmarks" icon={FlagEdit} />
            <Tool label="Save bookmarks" icon={FlagSave} />
            <Caret label="Save bookmark options" />
            <Tool label="Jump to bookmark" icon={FlagGo} />
          </Group>
          <Group label="Mode" center>
            <BoxTool label="Select mode" icon={Pointer} pressed />
            <BoxTool label="Zoom mode" icon={ZoomMode} />
            <BoxTool label="Pan mode" icon={PanMode} />
            <BoxTool label="Two cursor mode" icon={TwoCursor} />
            <BoxTool label="Edit mode" icon={EditMode} />
            <Sep />
            <Tool label="Stop drawing" icon={StopLight} />
          </Group>
        </div>

        <div className="flex gap-0.5">
          <Group label="Cursor">
            <Tool label="Insert cursor" icon={CursorAdd} />
            <Tool label="Delete cursor" icon={CursorDel} />
            <Tool label="Previous transition" icon={PrevTrans} />
            <Tool label="Next transition" icon={NextTrans} />
            <Tool label="Previous falling edge" icon={EdgeFallPrev} />
            <Tool label="Next falling edge" icon={EdgeFallNext} />
            <Tool label="Previous rising edge" icon={EdgeRisePrev} />
            <Tool label="Next rising edge" icon={EdgeRiseNext} />
          </Group>
          <Group label="Search">
            <Tool label="Drivers" icon={Gather} />
            <Caret label="Drivers options" off />
            <Tool label="Readers" icon={Spread} />
            <Caret label="Readers options" off />
            <Tool label="Expand net" icon={Expand} />
            <Sep />
            <label htmlFor="search" className="w-24 pl-2.5 text-[22px] leading-8 text-[#7c7c8c]">
              Search:
            </label>
            <input
              id="search"
              type="text"
              className="h-[38px] w-[232px] border-2 border-t-[#a0a0a0] border-l-[#a0a0a0] border-r-white border-b-white bg-[#f0f0f0] px-1 text-[22px]"
            />
            <button
              type="button"
              aria-label="Search history"
              className="mx-1 flex h-[34px] w-[34px] items-center justify-center border-2 border-t-white border-l-white border-r-[#696969] border-b-[#696969]"
            >
              <svg viewBox="0 0 12 6" className="mt-1 h-3 w-6" shapeRendering="crispEdges" aria-hidden="true">
                <path d="M0 0h11v1h-1v1h-1v1h-1v1h-1v1h-1v1h-1v-1h-1v-1h-1v-1h-1v-1h-1v-1h-1z" />
                <rect width="12" height="6" fill="url(#ditherB)" />
              </svg>
            </button>
            <Tool label="Find previous" icon={FindPrev} />
            <div className="-ml-1 flex">
              <Tool label="Find next" icon={FindNext} />
            </div>
            <div className="mr-1 ml-1.5 flex">
              <Tool label="Search options" icon={FindOpts} />
            </div>
          </Group>
          <Group label="Zoom">
            <Tool label="Zoom in" icon={ZoomIn} />
            <Tool label="Zoom out" icon={ZoomOut} />
            <Tool label="Zoom full" icon={ZoomFull} />
            <Tool label="Zoom on cursor" icon={ZoomCursor} />
            <Tool label="Zoom between cursors" icon={ZoomBetween} />
            <Tool label="Zoom other windows" icon={ZoomOthers} />
          </Group>
          <Group label="Waveform editor" center>
            <BoxTool label="Normal waves" icon={WaveCursor} pressed />
            <BoxTool label="Event waves" icon={WaveNavy} />
            <BoxTool label="Delta waves" icon={WaveGreen} />
            <Sep />
            <Tool label="Expand all time" icon={WaveDim} />
            <Tool label="Expand at cursor" icon={WaveHalf} />
            <Tool label="Collapse all time" icon={WaveLine} />
            <Tool label="Collapse at cursor" icon={WaveMark} />
          </Group>
        </div>
      </div>

      <main className="mt-0.5 flex flex-1 border-t-2 border-[#a0a0a0] font-['DejaVu_Sans_Condensed','DejaVu_Sans',sans-serif] text-[21px]">
        <div className="ml-0.5 w-0.5 shrink-0 bg-[#a0a0a0]" />

        <section aria-label="Signals" className="flex w-[316px] shrink-0 flex-col text-[22px]">
          <div className="flex h-9 shrink-0 items-center bg-[#808080] pl-5">
            <button type="button" aria-label="Signal display">
              <svg viewBox="0 0 16 16" className="size-8" shapeRendering="crispEdges" aria-hidden="true">
                <path d="M0 6L5 0l4 3-4 4H0z" fill="#700080" />
                <path d="M2 5l3-4 3 2-3 3z" fill="#d030e8" />
                <path d="M9 5h7v8H9z" fill="#106020" />
                <path d="M10 6h5v6h-5z" fill="#18b040" />
                <circle cx="11" cy="5.5" r="3" fill="#4888a8" />
                <path d="M5 6l5 5-5 5-5-5z" fill="#0050e8" />
                <circle cx="9" cy="6.5" r="3" fill="#00f0ff" />
              </svg>
            </button>
            <div className="flex pt-3 pl-2">
              <svg viewBox="0 0 5 3" className="h-1.5 w-2.5" shapeRendering="crispEdges" aria-hidden="true">
                <path d="M0 0h5v1h-1v1h-1v1h-1v-1h-1v-1h-1z" />
              </svg>
            </div>
          </div>
          <HSash />
          <div className="flex flex-1 bg-white pl-4">
            <div className="flex-1 bg-[#808080] pt-1 text-white">
              <ul>
                {SIGNALS.map((s, i) => (
                  <SignalName key={i} signal={s} />
                ))}
              </ul>
              <svg className="-mt-2 ml-1 h-5 w-[288px]" shapeRendering="crispEdges" aria-hidden="true">
                <path d="M1 2v14M2 3l5 6-5 6M6 9h282" stroke="#000" strokeWidth="2" fill="none" />
              </svg>
            </div>
          </div>
        </section>

        <VSash />

        <section aria-label="Messages" className="flex w-[200px] shrink-0 flex-col bg-[#808080] text-white">
          <h3 className="h-9 shrink-0 pt-1 pr-2.5 text-right leading-9">Msgs</h3>
          <HSash />
          <ul className="pt-1 pl-1">
            {SIGNALS.map((s, i) => (
              <li key={i} className="h-[34px] leading-[34px] whitespace-nowrap">{s.value}</li>
            ))}
          </ul>
          <hr className="mr-2 ml-1 border-t-2 border-black" />
        </section>

        <VSash />

        <section aria-label="Wave" className="flex min-w-0 flex-1 flex-col">
          <div className="h-9 shrink-0 bg-black" />
          <HSash />
          <Waveform />
        </section>

        <VSash />

        <div className="flex w-[22px] shrink-0 flex-col overflow-hidden">
          <div className="h-9 shrink-0 bg-[#808080]" />
          <HSash />
          <div className="flex flex-1 flex-col border-t-2 border-l-2 border-[#a0a0a0] bg-white pl-0.5">
            <button
              type="button"
              aria-label="Scroll up"
              className="flex h-[30px] items-center border-t-4 border-b-4 border-l-2 border-t-white border-b-[#909090] border-l-white bg-[#f0f0f0] pl-0.5"
            >
              <svg viewBox="0 0 7 4" className="h-2 w-3.5 shrink-0" shapeRendering="crispEdges" aria-hidden="true">
                <path d="M3 1h2v1h1v1h1v1h-7v-1h1v-1h2z" />
              </svg>
            </button>
            <div className="mb-1 h-0.5 bg-[#c8c8c8]" />
            <div className="flex-1 bg-[#f0f0f0]" />
          </div>
        </div>
      </main>
    </div>
  );
}
